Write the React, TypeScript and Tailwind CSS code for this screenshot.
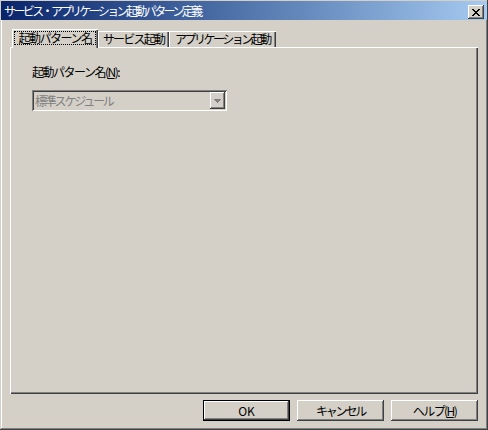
import React from "react";

const raised =
  "shadow-[inset_-1px_-1px_#404040,inset_1px_1px_#ffffff,inset_-2px_-2px_#808080,inset_2px_2px_#d4d0c8]";

const tabEdge = "shadow-[inset_1px_1px_#ffffff,inset_-1px_0_#404040,inset_-2px_0_#808080]";

function CloseGlyph() {
  // 8x7 pixel "X"
  const rows = ["XX....XX", ".XX..XX.", "..XXXX..", "...XX...", "..XXXX..", ".XX..XX.", "XX....XX"];
  return (
    <svg width="8" height="7" viewBox="0 0 8 7" shapeRendering="crispEdges">
      {rows.map((row, y) =>
        row.split("").map((c, x) =>
          c === "X" ? <rect key={`${x}-${y}`} x={x} y={y} width="1" height="1" fill="#000" /> : null
        )
      )}
    </svg>
  );
}

function ArrowGlyph() {
  return (
    <svg width="7" height="4" viewBox="0 0 7 4" shapeRendering="crispEdges">
      <rect x="0" y="0" width="7" height="1" fill="#808080" />
      <rect x="1" y="1" width="5" height="1" fill="#808080" />
      <rect x="2" y="2" width="3" height="1" fill="#808080" />
      <rect x="3" y="3" width="1" height="1" fill="#808080" />
    </svg>
  );
}

export default function App() {
  return (
    <div className="flex h-[430px] w-[488px] flex-col bg-[#d4d0c8] px-[1px] pt-[1px] font-['Noto_Sans_CJK_JP',sans-serif] text-[12px] leading-[12px] text-black shadow-[inset_-1px_-1px_#404040,inset_1px_1px_#d4d0c8,inset_-2px_-2px_#808080,inset_2px_2px_#ffffff]">
      {/* Title bar */}
      <div className="flex h-[19px] items-start bg-gradient-to-r from-[#0a246a] to-[#a6caf0]">
        <span className="mt-[4px] pl-[3px] tracking-[-2.6px] text-white">
          サービス・アプリケーション起動パターン定義
        </span>
        <button className={`ml-auto mr-[3px] mt-[4px] flex h-[14px] w-[16px] items-center justify-center bg-[#d4d0c8] ${raised}`}>
          <CloseGlyph />
        </button>
      </div>

      {/* Tabs */}
      <div className="ml-[11px] mt-[9px] flex items-end">
        <div className={`relative z-10 mb-[-1px] flex h-[19px] w-[86px] bg-[#d4d0c8] p-[2px] pb-[3px] ${tabEdge}`}>
          <span className="flex flex-1 items-center justify-center border border-dotted border-black tracking-[-1.5px]">
            起動パターン名
          </span>
        </div>
        <div className={`flex h-[16px] w-[71px] items-center justify-center tracking-[-1.8px] ${tabEdge}`}>
          サービス起動
        </div>
        <div className={`flex h-[16px] w-[107px] items-center justify-center tracking-[-2.5px] ${tabEdge}`}>
          アプリケーション起動
        </div>
      </div>

      {/* Panel */}
      <div className="mx-[9px] flex h-[347px] flex-col px-[22px] pt-[19px] shadow-[inset_1px_1px_#ffffff,inset_-1px_-1px_#404040,inset_-2px_-2px_#808080]">
        <div className="tracking-[-1.5px]">
          起動パターン名(<span className="underline">N</span>):
        </div>
        <div className="mt-[12px] flex h-[21px] w-[195px] items-center bg-[#d4d0c8] p-[2px] shadow-[inset_1px_1px_#808080,inset_-1px_-1px_#ffffff,inset_2px_2px_#404040,inset_-2px_-2px_#d4d0c8]">
          <span className="flex-1 pl-[1px] tracking-[-2.2px] text-[#808080]">標準スケジュール</span>
          <span className={`flex h-[17px] w-[15px] items-center justify-center ${raised}`}>
            <ArrowGlyph />
          </span>
        </div>
      </div>

      {/* Buttons */}
      <div className="mr-[9px] mt-[6px] flex justify-end gap-[7px]">
        <button className="flex h-[21px] w-[87px] items-center justify-center border border-black">
          <span className={`flex h-full w-full items-center justify-center ${raised}`}>OK</span>
        </button>
        <button className={`flex h-[21px] w-[87px] items-center justify-center tracking-[-2.2px] ${raised}`}>
          キャンセル
        </button>
        <button className={`flex h-[21px] w-[87px] items-center justify-center tracking-[-1.6px] ${raised}`}>
          ヘルプ(<span className="underline">H</span>)
        </button>
      </div>
    </div>
  );
}
